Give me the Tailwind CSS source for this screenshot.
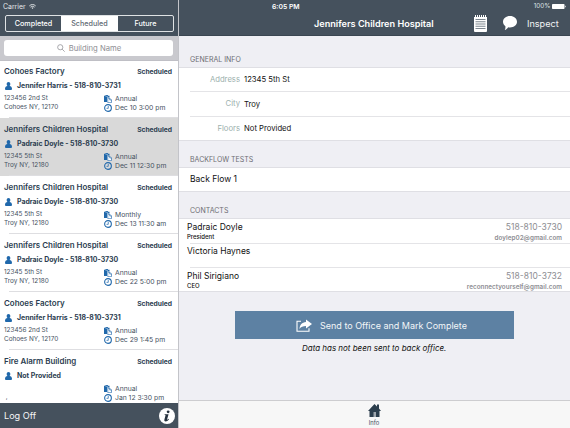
<!DOCTYPE html>
<html lang="en">
<head>
<meta charset="utf-8">
<title>Inspections</title>
<script src="https://cdn.jsdelivr.net/npm/@tailwindcss/browser@4"></script>
</head>
<body class="overflow-hidden">
<svg class="hidden">
  <symbol id="person" viewBox="0 0 14 16"><path d="M7 0C4.900 0 3.300 1.600 3.300 4c0 1.800.7 3.400 1.700 4.200C2 8.600 0 10.500 0 13.500 0 15 .9 16 2.400 16h9.200c1.500 0 2.400-1 2.400-2.500 0-3-2-4.900-5-5.300 1-.8 1.700-2.400 1.700-4.200C10.700 1.600 9.100 0 7 0z"/></symbol>
  <symbol id="paste" viewBox="0 0 16 16"><path d="M0 1.500h3V0h5v1.500h3V5H6v9H0z"/><path d="M3 2.600h5" stroke="#fff" stroke-width=".9"/><path d="M7.500 6.500h4l3.500 3.500v5.300H7.500z" fill="#fff" stroke="currentColor" stroke-width="1.300"/><path d="M11.300 6.500V10H15" fill="none" stroke="currentColor" stroke-width="1.200"/></symbol>
  <symbol id="clock" viewBox="0 0 16 16"><circle cx="8" cy="8" r="6.700" fill="none" stroke="currentColor" stroke-width="2.200"/><path d="M8.500 4v4.700H5" fill="none" stroke="currentColor" stroke-width="1.500"/></symbol>
</svg>
<div class="flex h-[428px] w-[570px] bg-[#efeff4] font-['Inter','Liberation_Sans',sans-serif] text-[#111]">
  <aside class="flex w-[179px] shrink-0 flex-col border-r border-[#c3c4c9] bg-white">
    <header class="h-9 shrink-0 bg-[#45515d] text-white">
      <div class="flex h-[13px] items-center gap-[3px] pl-[3px] text-[6.900px] leading-[13px] text-[#e6e9eb]"><span>Carrier</span>
        <svg class="h-[5px] w-[7px]" viewBox="0 0 14 10" fill="none" stroke="currentColor" stroke-width="1.900"><path d="M.7 3.800C4.300.2 9.700.2 13.300 3.800M3 6.300c2.300-2.200 5.700-2.200 8 0"/><path d="M7 10 4.800 7.700c1.300-1.100 3.100-1.100 4.400 0z" fill="currentColor" stroke="none"/></svg>
      </div>
      <div class="mt-[2px] ml-[5px] flex h-[17px] w-[169px] overflow-hidden rounded-[2px] border border-[#dfe2e4] text-center text-[7.200px] leading-[16px] font-medium">
        <span class="w-[55px]">Completed</span><span class="w-[57px] bg-white text-[#5f6973]">Scheduled</span><span class="w-[55px]">Future</span>
      </div>
    </header>
    <div class="flex h-[25px] shrink-0 items-center justify-center border-b border-[#bfbfc5] bg-[#c9c9ce]">
      <div class="mr-px flex h-4 w-[169px] items-center justify-center gap-[4px] rounded-[3px] bg-white pl-px text-[7.700px] text-[#8e8e93]">
        <svg class="h-2 w-2" viewBox="0 0 16 16" fill="none" stroke="currentColor" stroke-width="1.500"><circle cx="6.500" cy="6.500" r="5.200"/><path d="m10.300 10.300 5 5"/></svg><span class="pt-px">Building Name</span>
      </div>
    </div>
    <div id="jobs" class="-mt-px h-[343px] shrink-0 overflow-hidden text-[#2b3d50]"></div>
    <footer class="flex h-[25px] shrink-0 items-center justify-between bg-[#45515d] pr-[3px] pl-[4px] text-[9.100px] text-[#f4f5f6]"><span class="pt-px">Log Off</span>
      <svg class="h-4 w-4" viewBox="0 0 32 32"><circle cx="16" cy="16" r="16" fill="#fff"/><circle cx="18.300" cy="7.600" r="2.800" fill="#26323e"/><path d="M11.500 12.500h7.600l-2.800 10.200c-.3 1.200.7 1.100 2.900-1l.9.800c-2.400 3.300-4.700 4.300-6.700 4.300-2.300 0-3.200-1.500-2.600-3.800l2.200-7.800c.2-.9-.3-1.200-1.900-1.200z" fill="#26323e"/></svg>
    </footer>
  </aside>
  <main class="flex min-w-0 flex-1 flex-col">
    <header class="h-9 shrink-0 border-b border-[#3a4651] bg-[#45515d] text-white">
      <div class="flex h-[13px] items-center justify-between pr-[4px] pl-[93px] leading-[13px]">
        <span class="text-[6.800px] font-semibold">6:05 PM</span>
        <span class="flex items-center gap-[1.500px] text-[6.300px] text-[#dfe3e6]">100%
          <svg class="h-[5px] w-[14px]" viewBox="0 0 28 10" fill="#fff"><rect width="25" height="10" rx="1.500"/><path d="M26 3c2 .5 2 3.500 0 4z"/></svg></span>
      </div>
      <div class="flex h-[22px] items-center pl-[135px]">
        <h1 class="w-[160px] text-[9.150px] font-semibold whitespace-nowrap">Jennifers Children Hospital</h1>
        <svg class="-mt-px h-[17px] w-[13px]" viewBox="0 0 26 34"><path d="M0 4h26v28q0 2-2 2H2q-2 0-2-2z" fill="#fff"/><path d="M3 0v5M7 0v5M11 0v5M15 0v5M19 0v5M23 0v5" stroke="#fff" stroke-width="2"/><path d="M3 9h20M3 13.500h20M3 18h20M3 22.500h20M3 27h20" stroke="#65717c" stroke-width="1.700"/></svg>
        <svg class="mt-[-2px] ml-4 h-[14px] w-[14px]" viewBox="0 0 28 28"><path d="M14 0c8 0 14 5 14 11.700S22 23 14 23c-1.300 0-2.500-.1-3.600-.4C8.500 25.500 6 27.500 3.500 28c1.200-2 1.600-4.500 1.300-7.500C1.800 18.400 0 15.300 0 11.700 0 5 6 0 14 0z" fill="#fff"/></svg>
        <span class="ml-[10px] text-[9.100px] text-[#f2f4f5]">Inspect</span>
      </div>
    </header>
    <h2 class="h-8 shrink-0 border-b border-[#dfdfe4] pt-[19px] pl-[11px] text-[7px] leading-[10px] text-[#6d6d72]">GENERAL INFO</h2>
    <dl class="shrink-0 border-b border-[#dfdfe4] bg-white pl-[11px] text-[7.700px] leading-[24px]">
      <div class="flex h-6 gap-[4px] border-b border-[#e4e4e7]"><dt class="w-[50px] text-right text-[#9bb0ad]">Address</dt><dd>12345 5th St</dd></div>
      <div class="flex h-[25px] gap-[4px] border-b border-[#e4e4e7]"><dt class="w-[50px] text-right text-[#9bb0ad]">City</dt><dd class="pt-px">Troy</dd></div>
      <div class="flex h-[23px] gap-[4px]"><dt class="w-[50px] text-right text-[#9bb0ad]">Floors</dt><dd>Not Provided</dd></div>
    </dl>
    <h2 class="h-[27px] shrink-0 border-b border-[#dfdfe4] pt-[14px] pl-[11px] text-[7px] leading-[10px] text-[#6d6d72]">BACKFLOW TESTS</h2>
    <div class="h-6 shrink-0 border-b border-[#dfdfe4] bg-white pl-[11px] text-[8.500px] leading-[23px]">Back Flow 1</div>
    <h2 class="h-[27px] shrink-0 border-b border-[#dfdfe4] pt-[14px] pl-[11px] text-[7px] leading-[10px] text-[#6d6d72]">CONTACTS</h2>
    <ul class="shrink-0 border-b border-[#dfdfe4] bg-white text-[8.500px] leading-[11px]">
      <li class="flex h-6 justify-between pt-[3px] pr-2 pl-2"><div>Padraic Doyle<p class="text-[6px] leading-[8px] font-medium">President</p></div><div class="text-right text-[#8e8e93]">518-810-3730<p class="pt-px text-[6.300px] leading-[9px] font-semibold tracking-[0.040px]">doylep02@gmail.com</p></div></li>
      <li class="ml-[11px] h-[25px] border-y border-[#e4e4e7] pt-[2px]"><span class="-ml-[3px]">Victoria Haynes</span></li>
      <li class="flex h-[23px] justify-between pt-[3px] pr-2 pl-2"><div>Phil Sirigiano<p class="text-[6px] leading-[8px] font-medium">CEO</p></div><div class="text-right text-[#8e8e93]">518-810-3732<p class="pt-px text-[6.300px] leading-[9px] font-semibold tracking-[0.040px]">reconnectyourself@gmail.com</p></div></li>
    </ul>
    <section class="flex-1 pt-[19px]">
      <button class="ml-[56px] flex h-7 w-[279px] items-center bg-[#5d81a3] pl-[61px] text-[9px] text-[#f3f6f8]">
        <svg class="mr-2 h-[13px] w-4" viewBox="0 0 32 26"><path d="M10 4.500H2v20h24v-6" fill="none" stroke="#fff" stroke-width="2.200"/><path d="M20 1l12 9-12 9v-5c-6 0-10 1.500-13 6C7.500 12 12 6.500 20 6z" fill="#fff"/></svg>
        <span class="pt-px">Send to Office and Mark Complete</span>
      </button>
      <p class="mt-[4px] pl-[123px] text-[7.980px] leading-[10px] italic"><span>Data has not been sent to back office.</span></p>
    </section>
    <nav class="flex h-7 shrink-0 flex-col items-center border-t border-[#cdcdd0] bg-[#f7f7f7] pt-[3px] pr-px">
      <svg class="h-[13px] w-[13px]" viewBox="0 0 26 26" fill="#2b3d4c"><path d="M13 0 18 5V1h4v8l4 5h-3v12H3V14H0z"/><path d="M11 16h5v10h-5z" fill="#9da5ac"/></svg>
      <span class="mt-[2px] text-[5.800px] leading-[8px] text-[#46525e]">Info</span>
    </nav>
  </main>
</div>
<script>
const J = 'Jennifers Children Hospital', P = 'Padraic Doyle - 518-810-3730', H = 'Jennifer Harris - 518-810-3731';
const jobs = [
  ['Cohoes Factory', H, '123456 2nd St', 'Cohoes NY, 12170', 'Annual', 'Dec 10 3:00 pm'],
  [J, P, '12345 5th St', 'Troy NY, 12180', 'Annual', 'Dec 11 12:30 pm'],
  [J, P, '12345 5th St', 'Troy NY, 12180', 'Monthly', 'Dec 13 11:30 am'],
  [J, P, '12345 5th St', 'Troy NY, 12180', 'Annual', 'Dec 22 5:00 pm'],
  ['Cohoes Factory', H, '123456 2nd St', 'Cohoes NY, 12170', 'Annual', 'Dec 29 1:45 pm'],
  ['Fire Alarm Building', 'Not Provided', '&nbsp;', '&nbsp;,', 'Annual', 'Jan 12 3:30 pm']
];
document.getElementById('jobs').innerHTML = jobs.map(([t, p, a, c, f, d], i) => `
<article class="h-[58px] whitespace-nowrap ${i === 1 ? 'bg-[#d9d9d9]' : ''}">
  <div class="flex h-[57px] flex-col pt-[6px] pr-[6px] pl-[4px]">
    <div class="flex h-3 items-center justify-between"><b class="text-[7.950px] font-semibold">${t}</b><b class="text-[6.700px] font-bold">Scheduled</b></div>
    <div class="mt-[2px] flex h-3 items-center gap-[5px]"><svg class="ml-px -mt-px h-[8px] w-[7px] text-[#2068ab]" fill="currentColor"><use href="#person"/></svg><b class="text-[6.950px] font-bold">${p}</b></div>
    <div class="mt-[2px] flex text-[6.800px] leading-[9.400px] text-[#46525f]">
      <div class="w-[100px] text-[6.400px]"><p>${a}</p><p>${c}</p></div>
      <div><p class="flex items-center gap-[3px]"><svg class="h-2 w-2 text-[#2068ab]" fill="currentColor"><use href="#paste"/></svg>${f}</p><p class="flex items-center gap-[3px]"><svg class="h-[8px] w-2 text-[#2068ab]" fill="none"><use href="#clock"/></svg>${d}</p></div>
    </div>
  </div>
  <div class="ml-[9px] h-px bg-[#dedee1]"></div>
</article>`).join('');
</script>
</body>
</html>
